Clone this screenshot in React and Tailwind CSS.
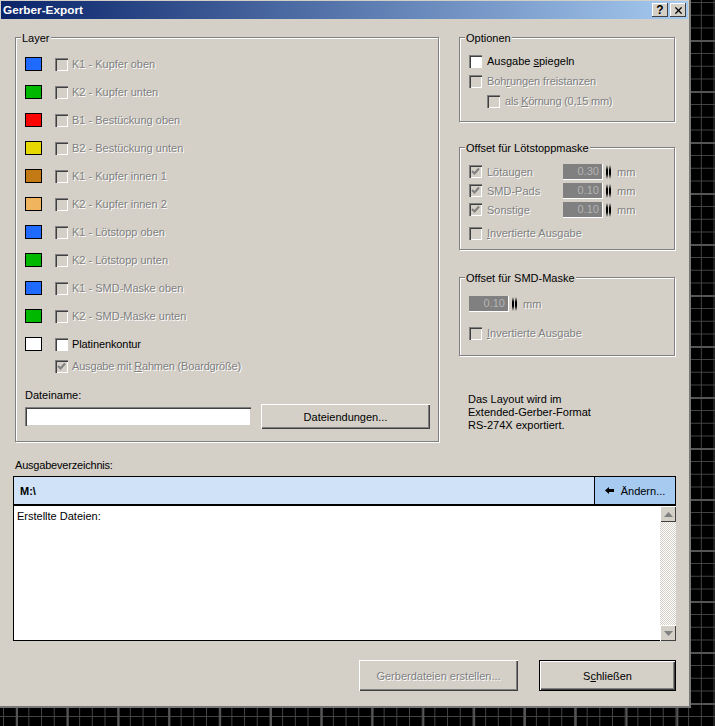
import { X } from 'lucide-react';

const FONT = "font-['Liberation_Sans',Arial,sans-serif] text-[11px] leading-[14px]";
const DISABLED = 'text-[#808080] [text-shadow:1px_1px_0_#ffffff]';

const layers = [
  ['K1 - Kupfer oben', 'bg-[#1f6bff]'],
  ['K2 - Kupfer unten', 'bg-[#00b800]'],
  ['B1 - Bestückung oben', 'bg-[#ff0000]'],
  ['B2 - Bestückung unten', 'bg-[#e6d800]'],
  ['K1 - Kupfer innen 1', 'bg-[#c47a14]'],
  ['K2 - Kupfer innen 2', 'bg-[#f0b45f]'],
  ['K1 - Lötstopp oben', 'bg-[#1f6bff]'],
  ['K2 - Lötstopp unten', 'bg-[#00b800]'],
  ['K1 - SMD-Maske oben', 'bg-[#1f6bff]'],
  ['K2 - SMD-Maske unten', 'bg-[#00b800]'],
];

function Check({ checked, enabled }) {
  return (
    <span
      className={`w-[13px] h-[13px] shrink-0 flex items-center justify-center shadow-[inset_1px_1px_0_#808080,inset_2px_2px_0_#404040,inset_-1px_-1px_0_#ffffff] ${enabled ? 'bg-white' : 'bg-[#d4d0c8]'}`}
    >
      {checked && (
        <svg width="9" height="9" viewBox="0 0 9 9">
          <path d="M1 4 L3.5 6.5 L8 1.5" fill="none" stroke="#808080" strokeWidth="2" />
        </svg>
      )}
    </span>
  );
}

function Group({ title, className, children }) {
  return (
    <div className={`border border-[#808080] shadow-[inset_1px_1px_0_#ffffff,1px_1px_0_#ffffff] ${className}`}>
      <div className="-mt-[7px] ml-[5px] w-fit bg-[#d4d0c8] pr-[1px] pl-[1px] text-black">{title}</div>
      {children}
    </div>
  );
}

function Spinner() {
  return (
    <span className="flex gap-[1px] mx-[3px]">
      <span className="w-[2px] h-[14px] bg-[linear-gradient(#d4d0c8,#000000_35%,#000000_65%,#d4d0c8)]" />
      <span className="w-[2px] h-[14px] bg-[linear-gradient(#d4d0c8,#000000_35%,#000000_65%,#d4d0c8)]" />
    </span>
  );
}

function NumField({ value }) {
  return (
    <span className="flex items-center">
      <span className="w-[40px] h-[16px] bg-[#808080] text-right pr-[3px] text-[#b4b4b4] border-r border-b border-white leading-[15px]">
        {value}
      </span>
      <Spinner />
      <span className={`ml-[3px] ${DISABLED}`}>mm</span>
    </span>
  );
}

function OffsetRow({ label, value }) {
  return (
    <div className="h-[19px] flex items-center">
      <Check checked />
      <span className={`ml-[5px] w-[76px] ${DISABLED}`}>{label}</span>
      <NumField value={value} />
    </div>
  );
}

function Invert() {
  return (
    <div className="flex items-center gap-[5px]">
      <Check />
      <span className={DISABLED}><u>I</u>nvertierte Ausgabe</span>
    </div>
  );
}

export default function App() {
  return (
    <div className={`w-[715px] h-[726px] overflow-hidden bg-black bg-[linear-gradient(90deg,#555555_2px,transparent_2px),linear-gradient(#555555_2px,transparent_2px),linear-gradient(90deg,#444444_1px,transparent_1px),linear-gradient(#444444_1px,transparent_1px)] bg-[size:50.8px_51px,51px_51px,12.7px_12.75px,12.75px_12.75px] bg-[position:16px_0,0_40px,3px_0,0_2px] ${FONT}`}>
      <div className="w-[691px] h-[708px] bg-[#d4d0c8] border-r-2 border-b-2 border-[#777777] pt-[1px] pl-[1px] pr-[1px]">
        {/* Title bar */}
        <div className="h-[18px] flex items-center justify-between pl-[2px] pr-[2px] bg-[linear-gradient(90deg,#0a246a,#a6caf0)]">
          <span className="text-white font-bold text-[11.8px]">Gerber-Export</span>
          <div className="flex gap-[2px]">
            <span className="w-[16px] h-[14px] bg-[#d4d0c8] flex items-center justify-center font-bold text-black text-[12px] shadow-[inset_-1px_-1px_0_#404040,inset_1px_1px_0_#ffffff]">?</span>
            <span className="w-[16px] h-[14px] bg-[#d4d0c8] flex items-center justify-center text-black shadow-[inset_-1px_-1px_0_#404040,inset_1px_1px_0_#ffffff]">
              <X size={11} strokeWidth={2.6} />
            </span>
          </div>
        </div>

        <div className="pl-[12px] pt-[18px]">
          <div className="flex pl-[2px] gap-[20px]">
            {/* Layer */}
            <Group title="Layer" className="w-[424px] h-[405px]">
              <div className="mt-[5px] pl-[9px]">
                {layers.map(([name, color]) => (
                  <div key={name} className="h-[28px] flex items-center">
                    <span className={`w-[17px] h-[14px] border border-black ${color}`} />
                    <span className="ml-[13px]"><Check /></span>
                    <span className={`ml-[4px] ${DISABLED}`}>{name}</span>
                  </div>
                ))}
                <div className="h-[28px] flex items-center">
                  <span className="w-[17px] h-[14px] border border-black bg-white" />
                  <span className="ml-[13px]"><Check enabled /></span>
                  <span className="ml-[4px] text-black tracking-[-0.1px]">Platinenkontur</span>
                </div>
                <div className="h-[16px] flex items-center pl-[30px]">
                  <Check checked />
                  <span className={`ml-[4px] tracking-[-0.17px] ${DISABLED}`}>Ausgabe mit <u>R</u>ahmen (Boardgröße)</span>
                </div>
                <div className="mt-[14px] text-black">Dateiname:</div>
                <div className="mt-[2px] flex items-center gap-[10px]">
                  <div className="w-[226px] h-[19px] bg-white shadow-[inset_1px_1px_0_#808080,inset_2px_2px_0_#404040,inset_-1px_-1px_0_#d4d0c8]" />
                  <button className="w-[169px] h-[25px] text-black bg-[#d4d0c8] shadow-[inset_1px_1px_0_#ffffff,inset_-1px_-1px_0_#404040,inset_-2px_-2px_0_#808080]">
                    Dateiendungen...
                  </button>
                </div>
              </div>
            </Group>

            {/* Right column */}
            <div className="w-[216px]">
              <Group title="Optionen" className="h-[85px]">
                <div className="mt-[6px] pl-[9px]">
                  <div className="h-[20px] flex items-center gap-[5px]">
                    <Check enabled />
                    <span className="text-black">Ausgabe <u>s</u>piegeln</span>
                  </div>
                  <div className="h-[20px] flex items-center gap-[5px]">
                    <Check />
                    <span className={`tracking-[-0.08px] ${DISABLED}`}>Boh<u>r</u>ungen freistanzen</span>
                  </div>
                  <div className="h-[20px] flex items-center gap-[5px] pl-[18px]">
                    <Check />
                    <span className={`tracking-[-0.22px] ${DISABLED}`}>als <u>K</u>örnung (0,15 mm)</span>
                  </div>
                </div>
              </Group>

              <Group title="Offset für Lötstoppmaske" className="h-[103px] mt-[25px]">
                <div className="mt-[7px] pl-[9px]">
                  <OffsetRow label="Lötaugen" value="0.30" />
                  <OffsetRow label="SMD-Pads" value="0.10" />
                  <OffsetRow label="Sonstige" value="0.10" />
                  <div className="mt-[7px]"><Invert /></div>
                </div>
              </Group>

              <Group title="Offset für SMD-Maske" className="h-[79px] mt-[27px]">
                <div className="mt-[11px] pl-[9px]">
                  <NumField value="0.10" />
                  <div className="mt-[14px]"><Invert /></div>
                </div>
              </Group>

              <p className="mt-[37px] ml-[9px] text-black leading-[13px]">
                Das Layout wird im<br />Extended-Gerber-Format<br />RS-274X exportiert.
              </p>
            </div>
          </div>

          {/* Output */}
          <div className="mt-[16px] pl-[2px] text-black tracking-[-0.2px]">Ausgabeverzeichnis:</div>
          <div className="mt-[4px] w-[663px] h-[30px] flex border-2 border-black border-t border-l border-r text-black bg-[#cfe2f7]">
            <div className="flex-1 flex items-center pl-[6px] font-bold border-r border-black">M:\</div>
            <div className="w-[80px] flex items-center justify-center gap-[7px] bg-[#a6caf0]">
              <svg width="9" height="9" viewBox="0 0 9 9">
                <path d="M0 4.5 L4 1 V3 H9 V6 H4 V8 Z" fill="#000000" />
              </svg>
              Ändern...
            </div>
          </div>
          <div className="w-[663px] h-[135px] flex">
            <div className="w-[647px] bg-white border-l border-b border-black pl-[3px] pt-[3px] text-black">Erstellte Dateien:</div>
            <div className="w-[16px] flex flex-col justify-between bg-[conic-gradient(#ffffff_25%,#d4d0c8_0_50%,#ffffff_0_75%,#d4d0c8_0)] bg-[size:2px_2px]">
              <span className="h-[16px] bg-[#d4d0c8] flex items-center justify-center shadow-[inset_1px_1px_0_#ffffff,inset_-1px_-1px_0_#404040]">
                <svg width="9" height="5" viewBox="0 0 9 5"><path d="M4.5 0 L9 5 H0 Z" fill="#808080" /></svg>
              </span>
              <span className="h-[16px] bg-[#d4d0c8] flex items-center justify-center shadow-[inset_1px_1px_0_#ffffff,inset_-1px_-1px_0_#404040]">
                <svg width="9" height="5" viewBox="0 0 9 5"><path d="M0 0 H9 L4.5 5 Z" fill="#808080" /></svg>
              </span>
            </div>
          </div>

          {/* Buttons */}
          <div className="mt-[19px] w-[663px] flex justify-end gap-[21px]">
            <button className={`w-[159px] h-[31px] bg-[#d4d0c8] shadow-[inset_1px_1px_0_#ffffff,inset_-1px_-1px_0_#404040,inset_-2px_-2px_0_#808080] ${DISABLED}`}>
              Gerberdateien erstellen...
            </button>
            <button className="w-[137px] h-[31px] bg-[#d4d0c8] text-black border border-black shadow-[inset_1px_1px_0_#ffffff,inset_-1px_-1px_0_#404040,inset_-2px_-2px_0_#808080]">
              S<u>c</u>hließen
            </button>
          </div>
        </div>
      </div>
    </div>
  );
}
